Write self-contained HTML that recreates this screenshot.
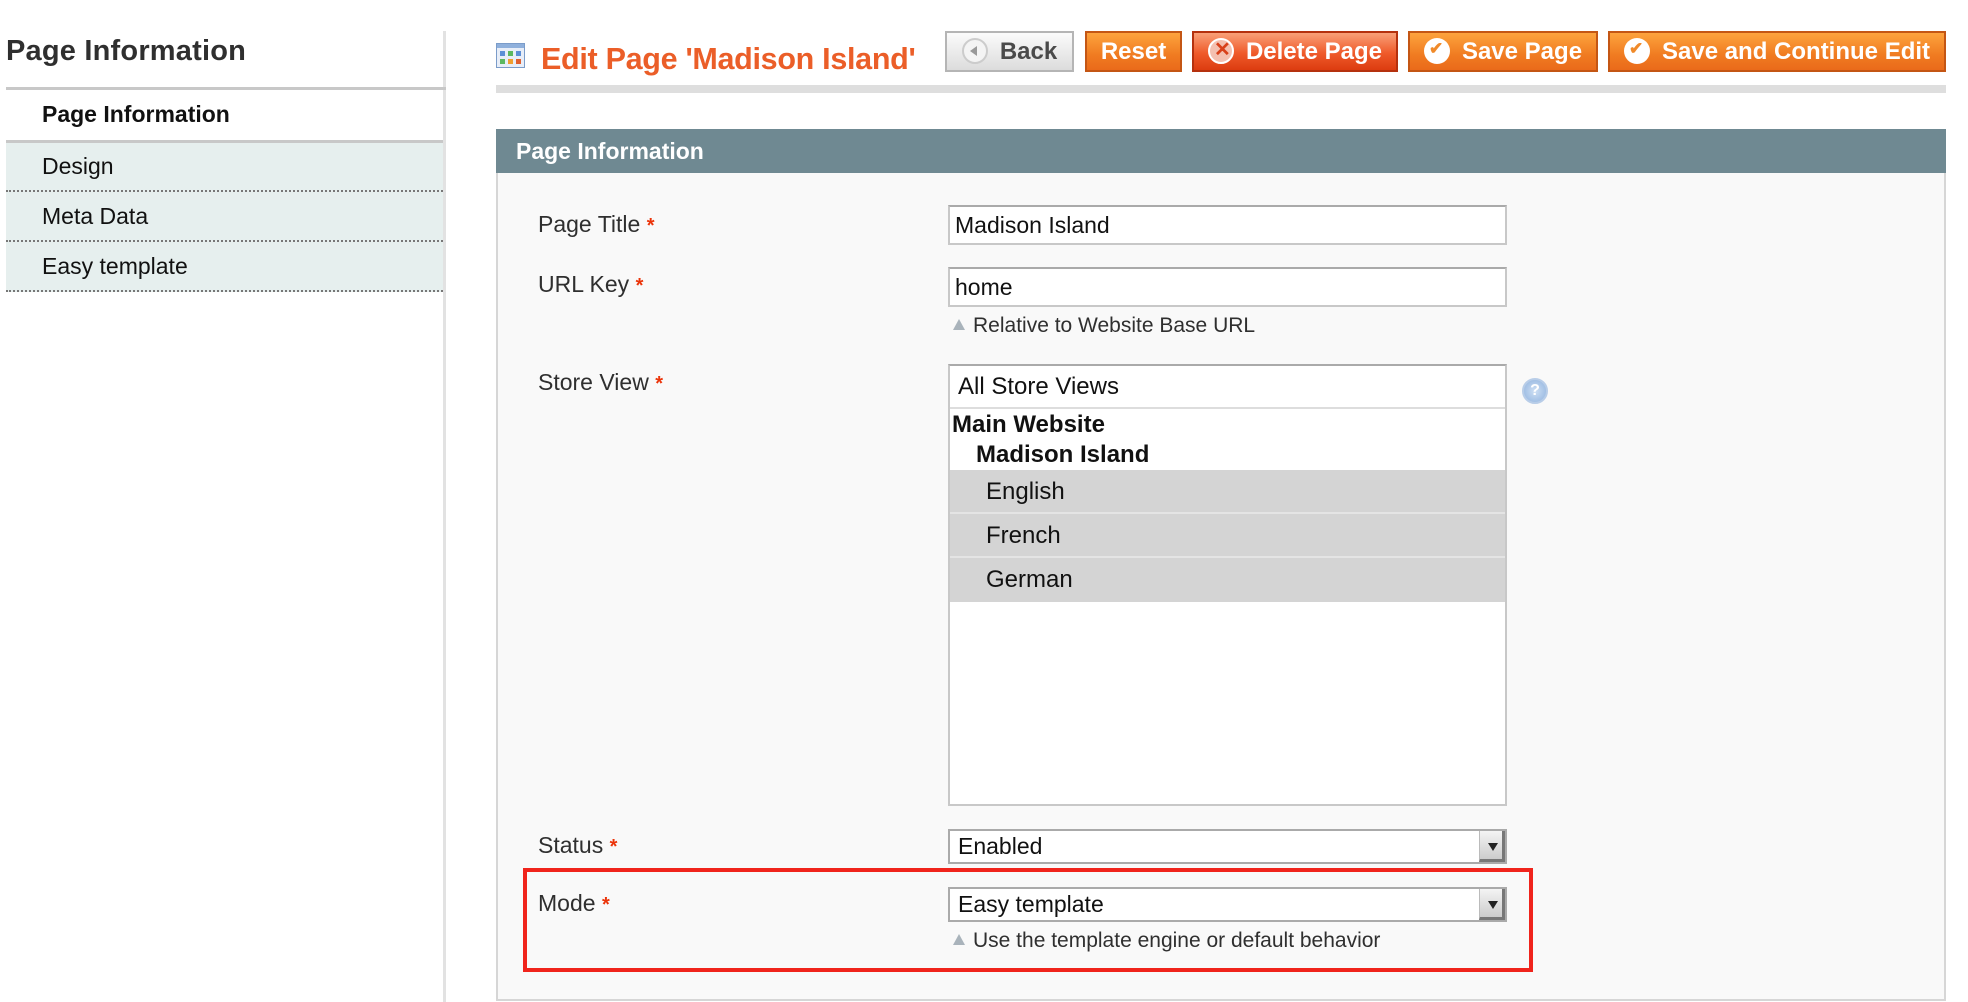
<!DOCTYPE html>
<html><head><meta charset="utf-8"><style>
*{box-sizing:border-box;margin:0;padding:0}
body{width:1968px;height:1002px;background:#fff;font-family:"Liberation Sans",Arial,sans-serif;position:relative;overflow:hidden;color:#2f2f2f}
.a{position:absolute}
.lbl{position:absolute;left:538px;font-size:23px;color:#2f2f2f}
.lbl b{color:#eb340a;font-size:20px}
.inp{position:absolute;left:948px;width:559px;background:#fff;border:2px solid #c8c8c8;border-top-color:#aaa;font-size:23px;color:#111;padding-left:5px}
.btn{position:absolute;top:31px;height:41px;border:2px solid #c45614;background:linear-gradient(#fda33d,#f07b21 60%,#ea6a1a);color:#fff;font-weight:bold;font-size:24px;line-height:37px;text-align:center}
.ic{display:inline-block;width:26px;height:26px;border-radius:50%;background:#fff;vertical-align:-5px;margin-right:12px;position:relative}
.sel{border:2px solid #aaa;}
.arr{position:absolute;right:0;top:0;bottom:0;width:26px;background:linear-gradient(#f4f4f4,#ccc);border-left:1px solid #bbb;border-bottom:3px solid #777;border-right:3px solid #777}
.arr:after{content:"";position:absolute;left:8px;top:12px;border:5px solid transparent;border-top:8px solid #222}
.hint{position:absolute;left:953px;font-size:21px;color:#2f2f2f}
.hint:before{content:"";display:inline-block;border:6px solid transparent;border-bottom:11px solid #a9b3bb;border-top:0;margin-right:8px;vertical-align:2px}
</style></head><body>
<div class="a" style="left:443px;top:31px;width:3px;height:971px;background:#e2e2e2"></div>
<div class="a" style="left:6px;top:35px;font-size:29px;font-weight:bold;color:#2f2f2f;letter-spacing:0.2px">Page Information</div>
<div class="a" style="left:6px;top:87px;width:440px;height:3px;background:#c8c8c8"></div>
<div class="a" style="left:42px;top:101px;font-size:23px;font-weight:bold;color:#111">Page Information</div>
<div class="a" style="left:6px;top:140px;width:437px;height:152px;background:#e6efee;border-top:3px solid #c8c8c8"></div>
<div class="a" style="left:6px;top:190px;width:437px;border-top:2px dotted #777"></div>
<div class="a" style="left:6px;top:240px;width:437px;border-top:2px dotted #777"></div>
<div class="a" style="left:6px;top:290px;width:437px;border-top:2px dotted #777"></div>
<div class="a" style="left:42px;top:153px;font-size:23px;color:#111">Design</div>
<div class="a" style="left:42px;top:203px;font-size:23px;color:#111">Meta Data</div>
<div class="a" style="left:42px;top:253px;font-size:23px;color:#111">Easy template</div>
<svg class="a" style="left:496px;top:43px" width="29" height="25" viewBox="0 0 29 25"><rect x="0.5" y="0.5" width="28" height="24" fill="#e8eef8" stroke="#7b9cc9"/><rect x="1" y="1" width="27" height="4" fill="#8fb0dc"/><rect x="4" y="8" width="5" height="5" fill="#5c8fd6"/><rect x="12" y="8" width="5" height="5" fill="#5cb860"/><rect x="20" y="8" width="5" height="5" fill="#5c8fd6"/><rect x="4" y="16" width="5" height="5" fill="#5cb860"/><rect x="12" y="16" width="5" height="5" fill="#f0a030"/><rect x="20" y="16" width="5" height="5" fill="#e06030"/></svg>
<div class="a" style="left:541px;top:42px;font-size:30.5px;font-weight:bold;color:#eb5e28;letter-spacing:-0.3px">Edit Page 'Madison Island'</div>
<div class="btn" style="left:945px;width:129px;border-color:#b5b5b5;background:linear-gradient(#fbfbfb,#dcdcdc);color:#4a4a4a"><span class="ic" style="border:2px solid #ccc;background:#f4f4f4"><span style="position:absolute;left:6px;top:6px;border:5px solid transparent;border-right:7px solid #999;border-left:0"></span></span>Back</div>
<div class="btn" style="left:1085px;width:97px">Reset</div>
<div class="btn" style="left:1192px;width:206px;border-color:#b5310e;background:linear-gradient(#f9a078,#ef5a2a 55%,#dc3c10)"><span class="ic" style="background:#f4c0b0;border:2px solid #fff"><span style="position:absolute;left:4px;top:-3px;color:#d8401a;font-size:20px;line-height:26px">✕</span></span>Delete Page</div>
<div class="btn" style="left:1408px;width:190px"><span class="ic"><span style="position:absolute;left:5px;top:-2px;color:#f08a2a;font-size:17px;line-height:26px">✔</span></span>Save Page</div>
<div class="btn" style="left:1608px;width:338px"><span class="ic"><span style="position:absolute;left:5px;top:-2px;color:#f08a2a;font-size:17px;line-height:26px">✔</span></span>Save and Continue Edit</div>
<div class="a" style="left:496px;top:85px;width:1450px;height:8px;background:#dedede"></div>
<div class="a" style="left:496px;top:129px;width:1450px;height:44px;background:#6f8992;color:#fff;font-weight:bold;font-size:23px;line-height:44px;padding-left:20px">Page Information</div>
<div class="a" style="left:496px;top:173px;width:1450px;height:828px;background:#f9f9f9;border:2px solid #d6d6d6;border-top:0"></div>
<div class="lbl" style="top:211px">Page Title <b>*</b></div>
<div class="inp" style="top:205px;height:40px;line-height:36px">Madison Island</div>
<div class="lbl" style="top:271px">URL Key <b>*</b></div>
<div class="inp" style="top:267px;height:40px;line-height:36px">home</div>
<div class="hint" style="top:314px">Relative to Website Base URL</div>
<div class="lbl" style="top:369px">Store View <b>*</b></div>
<div class="inp" style="top:364px;height:442px;padding:0;font-size:24px">
 <div style="height:43px;line-height:41px;padding-left:8px;border-bottom:2px solid #ddd">All Store Views</div>
 <div style="font-weight:bold;line-height:30px;padding-left:2px;margin-top:1px">Main Website</div>
 <div style="font-weight:bold;line-height:30px;padding-left:26px">Madison Island</div>
 <div style="background:#d4d4d4;height:44px;line-height:44px;padding-left:36px;border-bottom:2px solid #e4e4e4">English</div>
 <div style="background:#d4d4d4;height:44px;line-height:44px;padding-left:36px;border-bottom:2px solid #e4e4e4">French</div>
 <div style="background:#d4d4d4;height:44px;line-height:44px;padding-left:36px">German</div>
</div>
<div class="a" style="left:1522px;top:378px;width:26px;height:26px;border-radius:50%;background:radial-gradient(#cfe0f4,#8fb2de);border:2px solid #b8cde8;color:#fff;font-size:16px;font-weight:bold;text-align:center;line-height:22px">?</div>
<div class="lbl" style="top:832px">Status <b>*</b></div>
<div class="inp sel" style="top:829px;height:35px;line-height:31px;padding-left:8px">Enabled<div class="arr"></div></div>
<div class="a" style="left:523px;top:868px;width:1010px;height:104px;border:4px solid #f0241c"></div>
<div class="lbl" style="top:890px">Mode <b>*</b></div>
<div class="inp sel" style="top:887px;height:35px;line-height:31px;padding-left:8px">Easy template<div class="arr"></div></div>
<div class="hint" style="top:929px">Use the template engine or default behavior</div>
</body></html>
